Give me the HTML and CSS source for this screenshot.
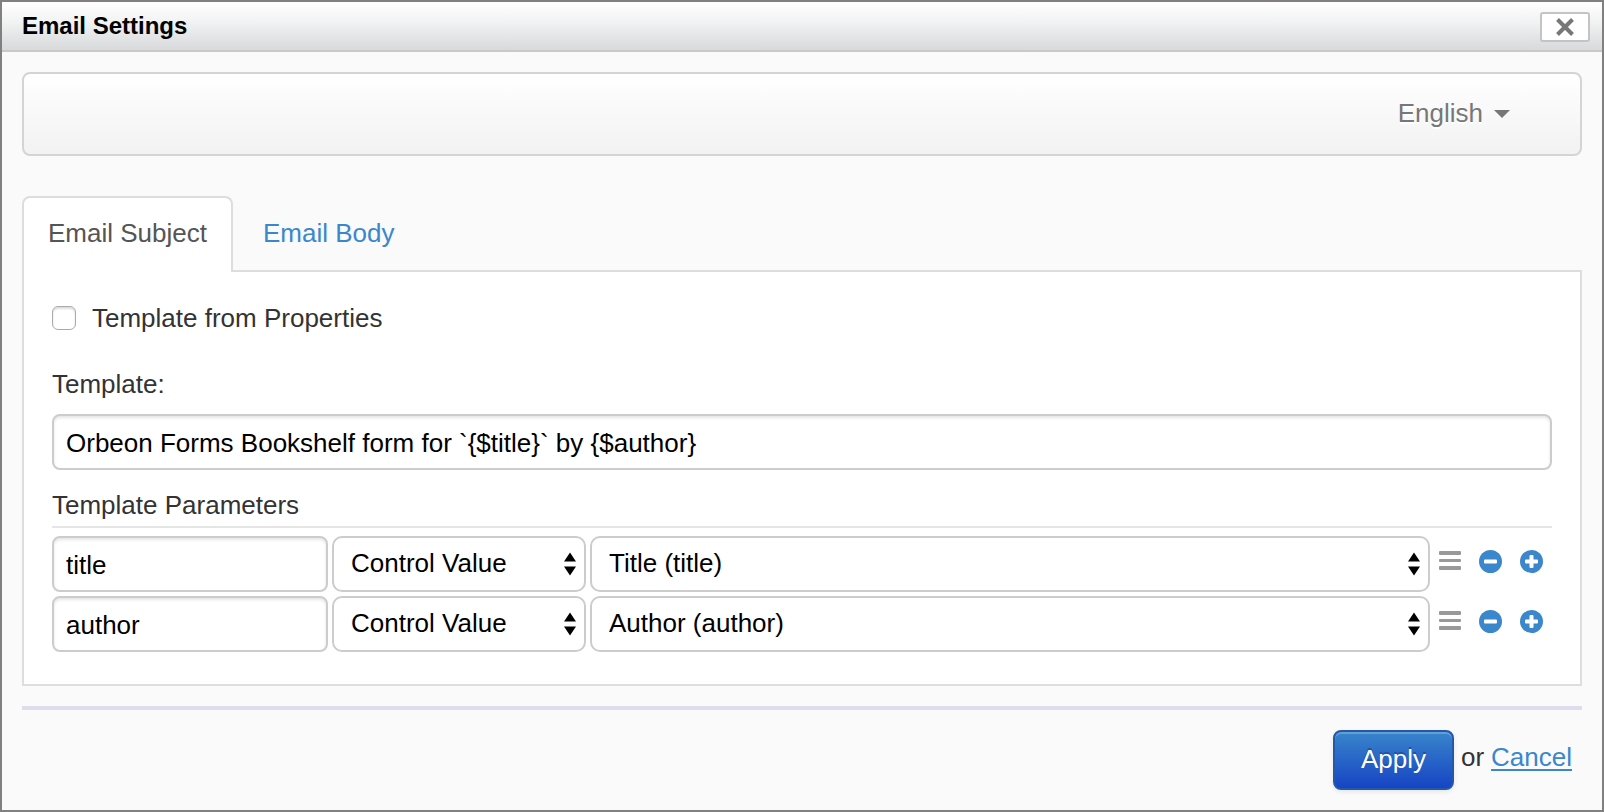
FILE: index.html
```html
<!DOCTYPE html>
<html lang="en">
<head>
<meta charset="utf-8">
<title>Email Settings</title>
<link rel="stylesheet" href="styles.css">
</head>
<body>
<svg class="sprite" aria-hidden="true">
  <symbol id="arrows" viewBox="0 0 12 24"><path d="M6 0.500L12 9.500H0ZM0 14.500H12L6 23.500Z"/></symbol>
  <symbol id="menu" viewBox="0 0 22 20"><rect y="0" width="22" height="4" rx="1"/><rect y="8" width="22" height="3" rx="1"/><rect y="15" width="22" height="4" rx="1"/></symbol>
  <symbol id="minus" viewBox="0 0 23 23"><circle cx="11.5" cy="11.5" r="11.5"/><rect class="mark" x="5" y="9.5" width="13" height="4" rx="1"/></symbol>
  <symbol id="plus" viewBox="0 0 23 23"><circle cx="11.5" cy="11.5" r="11.5"/><path class="mark" d="M10.5 5h2q1 0 1 1v3.500h3.500q1 0 1 1v2q0 1-1 1h-3.500V17q0 1-1 1h-2q-1 0-1-1v-3.500H6q-1 0-1-1v-2q0-1 1-1h3.500V6q0-1 1-1z"/></symbol>
</svg>
<main class="dialog">
  <header class="dialog-header">
    <h1>Email Settings</h1>
    <button class="close" type="button" aria-label="Close"><svg width="18" height="18" viewBox="0 0 18 18"><path d="M1.500 1.500L16.500 16.500M16.500 1.500L1.500 16.500"/></svg></button>
  </header>
  <form class="dialog-body">
    <div class="navbar">
      <button class="language" type="button">English<svg width="16" height="8" viewBox="0 0 16 8"><path d="M0 0H16L8 8Z"/></svg></button>
    </div>
    <nav class="tabs">
      <a class="tab active" href="#subject">Email Subject</a>
      <a class="tab" href="#body">Email Body</a>
    </nav>
    <section class="panel" id="subject">
      <label class="check"><input type="checkbox"><span>Template from Properties</span></label>
      <label class="label" for="template">Template:</label>
      <input class="field" id="template" type="text" value="Orbeon Forms Bookshelf form for `{$title}` by {$author}">
      <h2>Template Parameters</h2>
      <div class="params">
        <div class="row">
          <input class="field" type="text" value="title" aria-label="Parameter name">
          <div class="select"><select aria-label="Parameter type"><option>Control Value</option></select><svg class="arrows"><use href="#arrows"/></svg></div>
          <div class="select"><select aria-label="Control"><option>Title (title)</option></select><svg class="arrows"><use href="#arrows"/></svg></div>
          <div class="actions">
            <button class="icon" type="button" aria-label="Menu"><svg class="menu"><use href="#menu"/></svg></button>
            <button class="icon" type="button" aria-label="Remove"><svg class="round"><use href="#minus"/></svg></button>
            <button class="icon" type="button" aria-label="Add"><svg class="round"><use href="#plus"/></svg></button>
          </div>
        </div>
        <div class="row">
          <input class="field" type="text" value="author" aria-label="Parameter name">
          <div class="select"><select aria-label="Parameter type"><option>Control Value</option></select><svg class="arrows"><use href="#arrows"/></svg></div>
          <div class="select"><select aria-label="Control"><option>Author (author)</option></select><svg class="arrows"><use href="#arrows"/></svg></div>
          <div class="actions">
            <button class="icon" type="button" aria-label="Menu"><svg class="menu"><use href="#menu"/></svg></button>
            <button class="icon" type="button" aria-label="Remove"><svg class="round"><use href="#minus"/></svg></button>
            <button class="icon" type="button" aria-label="Add"><svg class="round"><use href="#plus"/></svg></button>
          </div>
        </div>
      </div>
    </section>
    <footer class="dialog-footer">
      <button class="apply" type="button">Apply</button>
      <span>or</span>
      <a class="cancel" href="#cancel">Cancel</a>
    </footer>
  </form>
</main>
</body>
</html>
```
FILE: styles.css
```css
* {
  box-sizing: border-box;
}

body {
  margin: 0;
  background: #fafafa;
  color: #333;
  font: 26px/40px "Liberation Sans", Arial, sans-serif;
}

button,
input,
select {
  margin: 0;
  font: inherit;
}

.sprite {
  position: absolute;
  width: 0;
  height: 0;
}

.dialog {
  min-height: 100vh;
  border: 2px solid #808080;
}

.dialog-header {
  display: flex;
  align-items: center;
  justify-content: space-between;
  height: 50px;
  padding: 0 12px 0 20px;
  border-bottom: 2px solid #c9c9c9;
  background: linear-gradient(#fff, #f2f3f3 40%, #d8d9db);
}

h1 {
  margin: 0;
  color: #000;
  font-size: 24px;
  line-height: 48px;
}

.close {
  display: grid;
  place-items: center;
  width: 50px;
  height: 30px;
  margin-top: 2px;
  padding: 0;
  border: 2px solid #c4c4c4;
  border-radius: 3px;
  background: #fff;
}

.close path {
  fill: none;
  stroke: #777;
  stroke-width: 4;
}

.dialog-body {
  padding: 20px;
}

.navbar {
  display: flex;
  align-items: center;
  justify-content: flex-end;
  height: 84px;
  padding-right: 70px;
  border: 2px solid #d4d4d4;
  border-radius: 8px;
  background: linear-gradient(#fff, #f2f2f2);
}

.language {
  display: flex;
  align-items: center;
  gap: 11px;
  padding: 0 0 2px;
  border: 0;
  background: none;
  color: #777;
  text-shadow: 0 2px 0 #fff;
}

.language svg {
  margin-top: 2px;
  fill: #777;
}

.tabs {
  display: flex;
  gap: 4px;
  margin-top: 40px;
}

.tab {
  padding: 16px 24px 18px;
  border: 2px solid transparent;
  border-bottom: 0;
  border-radius: 8px 8px 0 0;
  color: #3a87cb;
  line-height: 38px;
  text-decoration: none;
}

.tab.active {
  position: relative;
  margin-bottom: -2px;
  border-color: #ddd;
  background: #fff;
  color: #555;
}

.panel {
  padding: 26px 28px 32px;
  border: 2px solid #ddd;
  background: #fff;
}

.check {
  display: flex;
  align-items: center;
  gap: 16px;
}

.check input {
  appearance: none;
  width: 24px;
  height: 24px;
  border: 1px solid #aaa;
  border-radius: 6px;
  background: #fff;
  box-shadow: inset 0 2px 2px #ddd;
}

.label {
  display: block;
  margin: 26px 0 10px;
}

.field,
.select select {
  display: block;
  width: 100%;
  min-width: 0;
  height: 56px;
  border: 2px solid #ccc;
  border-radius: 8px;
  background: #fff;
  color: #000;
}

.field {
  padding: 2px 12px 0;
  box-shadow: inset 0 2px 3px #e6e6e6;
}

h2 {
  margin: 16px 0 8px;
  padding-bottom: 2px;
  border-bottom: 2px solid #e5e5e5;
  font-size: 26px;
  font-weight: 400;
  line-height: 38px;
}

.params {
  display: grid;
  gap: 4px;
}

.row {
  display: grid;
  grid-template-columns: 276px 254px 1fr 118px;
  gap: 4px;
}

.select {
  display: grid;
  align-items: center;
}

.select select,
.arrows {
  grid-area: 1 / 1;
}

.select select {
  appearance: none;
  padding: 0 36px 2px 17px;
  border-radius: 10px;
}

.arrows {
  justify-self: end;
  width: 12px;
  height: 24px;
  margin-right: 10px;
  pointer-events: none;
}

.actions {
  display: flex;
  justify-content: space-between;
  padding: 13px 9px 0 5px;
}

.icon {
  height: 24px;
  padding: 0;
  border: 0;
  background: none;
}

.icon svg {
  display: block;
}

.menu {
  width: 22px;
  height: 20px;
  fill: #999;
}

.round {
  width: 23px;
  height: 23px;
  fill: #3a87cb;
}

.mark {
  fill: #fff;
}

.dialog-footer {
  display: flex;
  align-items: flex-start;
  justify-content: flex-end;
  gap: 7px;
  margin-top: 20px;
  padding: 20px 10px 0;
  border-top: 4px solid #dfdded;
  line-height: 54px;
}

.apply {
  height: 60px;
  padding: 0 26px 2px;
  border: 2px solid #2359a8;
  border-radius: 8px;
  background: linear-gradient(#3a87cb, #1542c4) border-box;
  box-shadow: inset 0 2px 0 #619fd6, 0 2px 4px #e6e6e6;
  color: #fff;
  text-shadow: 0 -2px 0 #24519b;
}

.cancel {
  color: #3a87cb;
  text-decoration-thickness: 2px;
  text-underline-offset: 3px;
}
```
